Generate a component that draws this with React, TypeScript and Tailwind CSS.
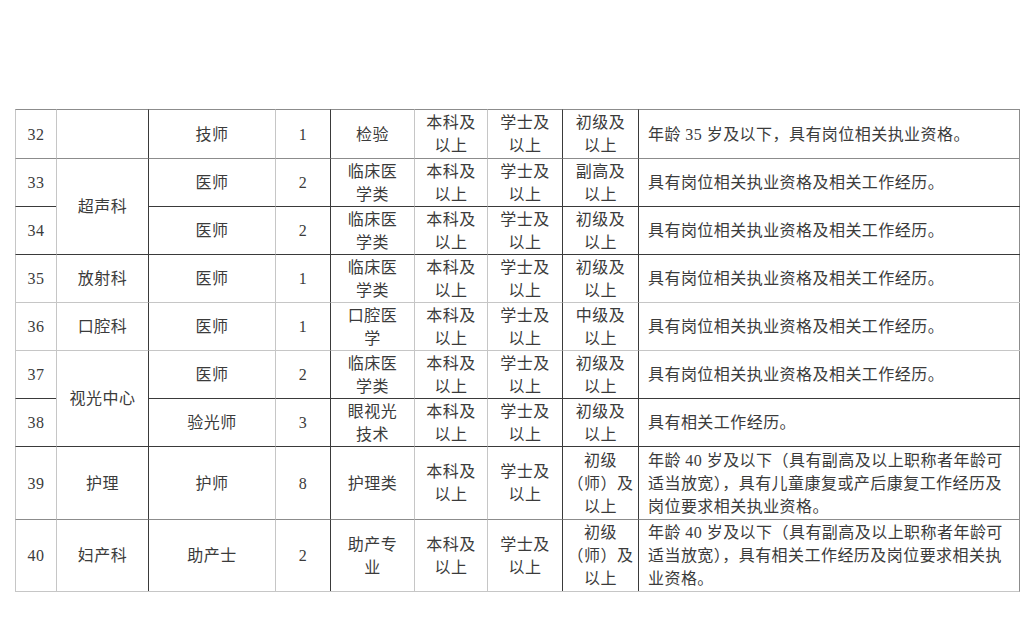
import { Fragment } from "react";

type Tone = "d" | "m" | "l";

const TOP: Record<Tone, string> = {
  d: "border-t-[#3a3a3a]",
  m: "border-t-[#8c8c8c]",
  l: "border-t-[#c6c6c6]",
};
const LEFT: Record<Tone, string> = {
  d: "border-l-[#3a3a3a]",
  m: "border-l-[#8c8c8c]",
  l: "border-l-[#c6c6c6]",
};

// left rule of each column, x = 15 / 56 / 148 / 275 / 330 / 414 / 487 / 562 / 638
const colTone: Tone[] = ["l", "l", "d", "l", "d", "l", "l", "d", "d"];
// top rule of each row
const rowTone: Tone[] = ["m", "m", "d", "d", "l", "l", "d", "d", "m"];

type Row = {
  no: string;
  dept?: { lines: string[]; span: number };
  pos: string;
  n: string;
  major: string[];
  edu: string[];
  deg: string[];
  title: string[];
  note: string[];
};

const both = ["本科及", "以上"];
const bach = ["学士及", "以上"];
const med = ["临床医", "学类"];
const cert = "具有岗位相关执业资格及相关工作经历。";

const rows: Row[] = [
  { no: "32", dept: { lines: [], span: 1 }, pos: "技师", n: "1", major: ["检验"], edu: both, deg: bach, title: ["初级及", "以上"], note: ["年龄 35 岁及以下，具有岗位相关执业资格。"] },
  { no: "33", dept: { lines: ["超声科"], span: 2 }, pos: "医师", n: "2", major: med, edu: both, deg: bach, title: ["副高及", "以上"], note: [cert] },
  { no: "34", pos: "医师", n: "2", major: med, edu: both, deg: bach, title: ["初级及", "以上"], note: [cert] },
  { no: "35", dept: { lines: ["放射科"], span: 1 }, pos: "医师", n: "1", major: med, edu: both, deg: bach, title: ["初级及", "以上"], note: [cert] },
  { no: "36", dept: { lines: ["口腔科"], span: 1 }, pos: "医师", n: "1", major: ["口腔医", "学"], edu: both, deg: bach, title: ["中级及", "以上"], note: [cert] },
  { no: "37", dept: { lines: ["视光中心"], span: 2 }, pos: "医师", n: "2", major: med, edu: both, deg: bach, title: ["初级及", "以上"], note: [cert] },
  { no: "38", pos: "验光师", n: "3", major: ["眼视光", "技术"], edu: both, deg: bach, title: ["初级及", "以上"], note: ["具有相关工作经历。"] },
  {
    no: "39",
    dept: { lines: ["护理"], span: 1 },
    pos: "护师",
    n: "8",
    major: ["护理类"],
    edu: both,
    deg: bach,
    title: ["初级", "（师）及", "以上"],
    note: ["年龄 40 岁及以下（具有副高及以上职称者年龄可", "适当放宽），具有儿童康复或产后康复工作经历及", "岗位要求相关执业资格。"],
  },
  {
    no: "40",
    dept: { lines: ["妇产科"], span: 1 },
    pos: "助产士",
    n: "2",
    major: ["助产专", "业"],
    edu: both,
    deg: bach,
    title: ["初级", "（师）及", "以上"],
    note: ["年龄 40 岁及以下（具有副高及以上职称者年龄可", "适当放宽），具有相关工作经历及岗位要求相关执", "业资格。"],
  },
];

function Cell({
  col,
  row,
  lines,
  span = 1,
  left = false,
  topTone,
}: {
  col: number;
  row: number;
  lines: string[];
  span?: number;
  left?: boolean;
  topTone?: Tone;
}) {
  return (
    <div
      className={[
        "flex flex-col justify-center border-t border-l leading-[23px]",
        span === 2 ? "row-span-2" : "",
        left ? "items-start pl-[9px] tracking-[0.45px]" : "items-center text-center tracking-[0.5px]",
        TOP[topTone ?? rowTone[row]],
        LEFT[colTone[col]],
      ].join(" ")}
    >
      {lines.map((t, i) => (
        <span key={i} className="whitespace-nowrap">
          {t}
        </span>
      ))}
    </div>
  );
}

export default function App() {
  return (
    <div className="min-h-[625px] w-[1030px] bg-white pl-[15px] pt-[109px] font-['Liberation_Serif','Noto_Sans_CJK_SC',serif] text-[16px] text-[#3b3b3b]">
      <div className="grid w-[1005px] grid-cols-[41px_92px_127px_55px_84px_73px_75px_76px_382px] grid-rows-[49px_48px_48px_48px_48px_48px_48px_73px_72px] border-r border-b border-r-[#8c8c8c] border-b-[#c6c6c6]">
        {rows.map((r, i) => {
          // the rule under 33 is dark from the 岗位 column rightwards
          const t: Tone | undefined = i === 2 ? "d" : undefined;
          return (
            <Fragment key={r.no}>
              <Cell col={0} row={i} lines={[r.no]} />
              {r.dept && <Cell col={1} row={i} lines={r.dept.lines} span={r.dept.span} />}
              <Cell col={2} row={i} lines={[r.pos]} topTone={t} />
              <Cell col={3} row={i} lines={[r.n]} topTone={t} />
              <Cell col={4} row={i} lines={r.major} topTone={t} />
              <Cell col={5} row={i} lines={r.edu} topTone={t} />
              <Cell col={6} row={i} lines={r.deg} topTone={t} />
              <Cell col={7} row={i} lines={r.title} topTone={t} />
              <Cell col={8} row={i} lines={r.note} left topTone={t} />
            </Fragment>
          );
        })}
      </div>
    </div>
  );
}
